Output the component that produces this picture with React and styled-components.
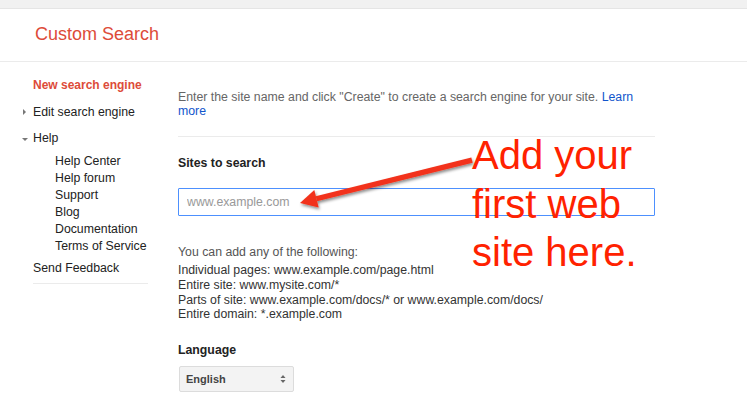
import React from "react";
import styled, { createGlobalStyle } from "styled-components";

const GlobalStyle = createGlobalStyle`
  html, body {
    margin: 0;
    padding: 0;
    background: #fff;
  }
  body {
    font-family: "Liberation Sans", Arial, sans-serif;
    font-size: 12.3px;
    color: #222;
  }
`;

const Page = styled.div`
  position: relative;
  width: 747px;
  height: 393px;
  overflow: hidden;
`;

const TopBar = styled.div`
  height: 8px;
  background: #f1f1f1;
  border-bottom: 1px solid #e5e5e5;
`;

const Header = styled.header`
  height: 52px;
  display: flex;
  align-items: center;
  padding-left: 35px;
  border-bottom: 1px solid #ebebeb;
`;

const Title = styled.div`
  font-size: 18px;
  color: #dd4b39;
  margin-top: -1px;
`;

const Main = styled.div`
  display: flex;
  align-items: flex-start;
`;

const Sidebar = styled.nav`
  margin-left: 33px;
  width: 115px;
  padding-top: 15px;
  padding-bottom: 6px;
  border-bottom: 1px solid #ebebeb;
`;

const NavItem = styled.div`
  display: flex;
  align-items: center;
  line-height: 17px;
  margin-bottom: ${(p) => p.$gap ?? 9.5}px;
  margin-left: ${(p) => (p.$arrow ? -11 : 0)}px;
  color: ${(p) => (p.$active ? "#dd4b39" : "#222")};
  font-weight: ${(p) => (p.$active ? "bold" : "normal")};
  font-size: ${(p) => (p.$active ? 12 : 12.3)}px;
`;

const Caret = styled.span`
  display: inline-block;
  width: 0;
  height: 0;
  margin-left: ${(p) => (p.$open ? 0 : 1)}px;
  ${(p) =>
    p.$open
      ? `border-left: 3px solid transparent;
         border-right: 3px solid transparent;
         border-top: 3.5px solid #777;
         margin-right: 5px;
         margin-top: 1px;`
      : `border-top: 3px solid transparent;
         border-bottom: 3px solid transparent;
         border-left: 3px solid #777;
         margin-right: 7px;`}
`;

const SubList = styled.div`
  padding-left: 22px;
  margin-top: -3.5px;
  margin-bottom: 5px;
`;

const SubItem = styled.div`
  line-height: 17px;
  color: #222;
`;

const Content = styled.section`
  margin-left: 30px;
  width: 477px;
  padding-top: 28px;
`;

const Intro = styled.p`
  margin: 0;
  max-width: 465px;
  line-height: 14px;
  color: #666;
`;

const Link = styled.a`
  color: #1155cc;
  text-decoration: none;
`;

const Divider = styled.div`
  height: 1px;
  background: #ebebeb;
  margin: 17.5px 0 19px;
`;

const Label = styled.div`
  font-weight: bold;
  color: #222;
  line-height: 15px;
  margin-top: ${(p) => p.$top ?? 0}px;
`;

const SiteInput = styled.input`
  display: block;
  box-sizing: border-box;
  width: 477px;
  height: 28px;
  margin-top: 17px;
  padding: 0 8px;
  border: 1px solid #4d90fe;
  border-radius: 1px;
  font-family: inherit;
  font-size: 12.3px;
  color: #222;
  outline: none;
  &::placeholder {
    color: #999;
  }
`;

const Help = styled.div`
  margin-top: 29px;
  line-height: 14.8px;
  color: #333;
`;

const HelpLead = styled.div`
  color: #555;
  line-height: 15px;
  margin-bottom: 3.5px;
`;

const Select = styled.div`
  box-sizing: border-box;
  width: 115px;
  height: 26px;
  margin-top: 7.5px;
  margin-left: 1px;
  padding: 0 7px 0 6px;
  display: flex;
  align-items: center;
  justify-content: space-between;
  background: #f3f3f3;
  border: 1px solid #dcdcdc;
  border-radius: 2px;
  font-size: 11px;
  font-weight: bold;
  color: #444;
`;

const Note = styled.div`
  position: absolute;
  left: 472px;
  top: 131px;
  font-size: 40px;
  line-height: 48.5px;
  color: #ff2200;
  white-space: nowrap;
`;

const Overlay = styled.svg`
  position: absolute;
  left: 0;
  top: 0;
  pointer-events: none;
`;

function SelectArrows() {
  return (
    <svg width="6" height="10" viewBox="0 0 6 10">
      <path d="M3 1 L5.5 4 H0.5 Z" fill="#666" />
      <path d="M3 9 L5.5 6 H0.5 Z" fill="#666" />
    </svg>
  );
}

export default function App() {
  const helpLinks = ["Help Center", "Help forum", "Support", "Blog", "Documentation", "Terms of Service"];
  return (
    <>
      <GlobalStyle />
      <Page>
        <TopBar />
        <Header>
          <Title>Custom Search</Title>
        </Header>
        <Main>
          <Sidebar>
            <NavItem $active>New search engine</NavItem>
            <NavItem $arrow>
              <Caret />
              Edit search engine
            </NavItem>
            <NavItem $arrow>
              <Caret $open />
              Help
            </NavItem>
            <SubList>
              {helpLinks.map((l) => (
                <SubItem key={l}>{l}</SubItem>
              ))}
            </SubList>
            <NavItem $gap={0}>Send Feedback</NavItem>
          </Sidebar>
          <Content>
            <Intro>
              Enter the site name and click "Create" to create a search engine for your site.{" "}
              <Link href="#">Learn more</Link>
            </Intro>
            <Divider />
            <Label>Sites to search</Label>
            <SiteInput placeholder="www.example.com" />
            <Help>
              <HelpLead>You can add any of the following:</HelpLead>
              <div>Individual pages: www.example.com/page.html</div>
              <div>Entire site: www.mysite.com/*</div>
              <div>Parts of site: www.example.com/docs/* or www.example.com/docs/</div>
              <div>Entire domain: *.example.com</div>
            </Help>
            <Label $top={21}>Language</Label>
            <Select>
              English
              <SelectArrows />
            </Select>
          </Content>
        </Main>
        <Overlay width="747" height="393" viewBox="0 0 747 393">
          <defs>
            <filter id="sh" x="-20%" y="-50%" width="140%" height="200%">
              <feDropShadow dx="1" dy="2" stdDeviation="1.5" floodColor="#000" floodOpacity="0.45" />
            </filter>
          </defs>
          <g filter="url(#sh)" fill="#f2331b" stroke="none">
            <path d="M471.3 157.6 L472.7 162.8 L317 201.3 L315.7 196.2 Z" />
            <path d="M300 203 L314.3 190.1 L318.7 207.6 Z" />
          </g>
        </Overlay>
        <Note>
          Add your
          <br />
          first web
          <br />
          site here.
        </Note>
      </Page>
    </>
  );
}
